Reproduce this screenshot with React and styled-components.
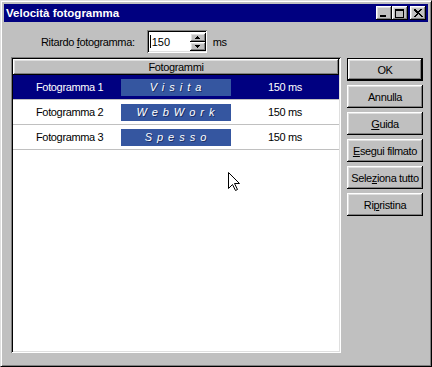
import React from "react";
import styled, { createGlobalStyle, css } from "styled-components";

const Global = createGlobalStyle`
  html, body { margin: 0; padding: 0; background: #c0c0c0; }
  body { font-family: "Liberation Sans", Arial, sans-serif; font-size: 11px; color: #000; letter-spacing: -0.35px; }
`;

const raised = css`
  background: #c0c0c0;
  box-shadow: inset -1px -1px #000, inset 1px 1px #fff, inset -2px -2px #808080, inset 2px 2px #dfdfdf;
`;

const sunken = css`
  box-shadow: inset 1px 1px #808080, inset -1px -1px #fff, inset 2px 2px #000, inset -2px -2px #dfdfdf;
`;

const Window = styled.div`
  position: relative;
  width: 432px;
  height: 367px;
  box-sizing: border-box;
  background: #c0c0c0;
  border-top: 1px solid #dfdfdf;
  border-left: 1px solid #dfdfdf;
  border-right: 1px solid #000;
  border-bottom: 1px solid #000;
  box-shadow: inset 1px 1px #fff, inset -1px -1px #808080;
  padding: 3px;
  display: flex;
  flex-direction: column;
`;

const TitleBar = styled.div`
  height: 18px;
  background: #000080;
  color: #fff;
  display: flex;
  align-items: center;
  justify-content: space-between;
  padding: 0 2px 0 2px;
`;

const Title = styled.span`
  font-weight: bold;
  font-size: 11.5px;
  letter-spacing: 0px;
`;

const TitleButtons = styled.div`
  display: flex;
  align-items: center;
`;

const TitleButton = styled.div`
  ${raised};
  width: 16px;
  height: 14px;
  margin-left: ${(p) => (p.$gap ? "2px" : "0")};
  display: flex;
  align-items: center;
  justify-content: center;
`;

const Body = styled.div`
  flex: 1;
  display: flex;
  padding-left: 7px;
`;

const LeftColumn = styled.div`
  width: 330px;
  display: flex;
  flex-direction: column;
`;

const TopRow = styled.div`
  display: flex;
  align-items: center;
  margin-top: 8px;
  height: 23px;
  padding-left: 30px;
`;

const Label = styled.span`
  margin-right: 12px;
`;

const Mn = styled.span`
  text-decoration: underline;
`;

const Field = styled.div`
  ${sunken};
  background: #fff;
  width: 60px;
  height: 23px;
  box-sizing: border-box;
  padding: 2px 1px 2px 3px;
  display: flex;
  align-items: center;
`;

const FieldText = styled.div`
  flex: 1;
  display: flex;
  align-items: center;
  letter-spacing: 0;
`;

const Caret = styled.span`
  display: inline-block;
  width: 1px;
  height: 13px;
  background: #000;
  margin-right: 1px;
`;

const Spinner = styled.div`
  width: 16px;
  height: 18px;
  display: flex;
  flex-direction: column;
`;

const SpinButton = styled.div`
  ${raised};
  flex: 1;
  display: flex;
  align-items: center;
  justify-content: center;
`;

const Unit = styled.span`
  margin-left: 6px;
`;

const ListBox = styled.div`
  ${sunken};
  background: #fff;
  margin-top: 4px;
  height: 296px;
  box-sizing: border-box;
  padding: 2px;
  display: flex;
  flex-direction: column;
`;

const Header = styled.div`
  ${raised};
  height: 16px;
  flex: none;
  display: flex;
  align-items: center;
  justify-content: center;
`;

const Row = styled.div`
  height: 25px;
  flex: none;
  box-sizing: border-box;
  border-bottom: 1px solid #c0c0c0;
  display: grid;
  grid-template-columns: 108px 110px 108px;
  align-items: center;
  background: ${(p) => (p.$selected ? "#000080" : "#fff")};
  color: ${(p) => (p.$selected ? "#fff" : "#000")};
`;

const NameCell = styled.span`
  padding-left: 23px;
  font-size: 11px;
`;

const Badge = styled.div`
  height: 17px;
  background: #3556a0;
  color: #fff;
  font-style: italic;
  font-size: 11px;
  letter-spacing: 5px;
  line-height: 17px;
  text-align: center;
  padding-left: 4px;
  text-shadow: 1px 1px 0 #1d3063;
`;

const MsCell = styled.span`
  text-align: center;
`;

const RightColumn = styled.div`
  width: 76px;
  margin-left: 6px;
  padding-top: 36px;
  display: flex;
  flex-direction: column;
  gap: 4px;
`;

const Button = styled.div`
  ${raised};
  height: 23px;
  box-sizing: border-box;
  display: flex;
  align-items: center;
  justify-content: center;
  white-space: nowrap;
  ${(p) =>
    p.$default &&
    css`
      border: 1px solid #000;
    `}
`;

const Pointer = styled.svg`
  position: absolute;
  left: 227px;
  top: 171px;
`;

const rows = [
  { name: "Fotogramma 1", badge: "Visita", ms: "150 ms", selected: true },
  { name: "Fotogramma 2", badge: "WebWork", ms: "150 ms" },
  { name: "Fotogramma 3", badge: "Spesso", ms: "150 ms" },
];

export default function App() {
  return (
    <>
      <Global />
      <Window>
        <TitleBar>
          <Title>Velocità fotogramma</Title>
          <TitleButtons>
            <TitleButton>
              <svg width="10" height="9" viewBox="0 0 10 9">
                <rect x="1" y="6" width="6" height="2" fill="#000" />
              </svg>
            </TitleButton>
            <TitleButton>
              <svg width="10" height="9" viewBox="0 0 10 9">
                <rect x="0.5" y="0.5" width="8" height="8" fill="none" stroke="#000" />
                <rect x="0" y="0" width="9" height="2" fill="#000" />
              </svg>
            </TitleButton>
            <TitleButton $gap>
              <svg width="10" height="9" viewBox="0 0 10 9">
                <path d="M1 0h2v1h1v1h2v-1h1v-1h2v1h-1v1h-1v1h-1v1h1v1h1v1h1v1h1v1h-2v-1h-1v-1h-1v-1h-1v1h-1v1h-1v1h-2v-1h1v-1h1v-1h1v-1h-1v-1h-1v-1h-1z" fill="#000" />
              </svg>
            </TitleButton>
          </TitleButtons>
        </TitleBar>
        <Body>
          <LeftColumn>
            <TopRow>
              <Label>
                Ritardo <Mn>f</Mn>otogramma:
              </Label>
              <Field>
                <FieldText>
                  <Caret />
                  150
                </FieldText>
                <Spinner>
                  <SpinButton>
                    <svg width="5" height="3" viewBox="0 0 5 3">
                      <path d="M2 0h1v1h1v1h1v1h-5v-1h1v-1h1z" fill="#000" />
                    </svg>
                  </SpinButton>
                  <SpinButton>
                    <svg width="5" height="3" viewBox="0 0 5 3">
                      <path d="M0 0h5v1h-1v1h-1v1h-1v-1h-1v-1h-1z" fill="#000" />
                    </svg>
                  </SpinButton>
                </Spinner>
              </Field>
              <Unit>ms</Unit>
            </TopRow>
            <ListBox>
              <Header>Fotogrammi</Header>
              {rows.map((r) => (
                <Row key={r.name} $selected={r.selected}>
                  <NameCell>{r.name}</NameCell>
                  <Badge>{r.badge}</Badge>
                  <MsCell>{r.ms}</MsCell>
                </Row>
              ))}
            </ListBox>
          </LeftColumn>
          <RightColumn>
            <Button $default>OK</Button>
            <Button>Annulla</Button>
            <Button>
              <span>
                <Mn>G</Mn>uida
              </span>
            </Button>
            <Button>
              <span>
                <Mn>E</Mn>segui filmato
              </span>
            </Button>
            <Button>
              <span>
                Sele<Mn>z</Mn>iona tutto
              </span>
            </Button>
            <Button>
              <span>
                Ri<Mn>p</Mn>ristina
              </span>
            </Button>
          </RightColumn>
        </Body>
        <Pointer width="13" height="20" viewBox="0 0 13 20">
          <path d="M0.5 0.5 L0.5 16.5 L4.5 12.5 L7.5 18.5 L9.5 17.5 L6.5 11.5 L11.5 11.5 Z" fill="#fff" stroke="#000" strokeWidth="1" />
        </Pointer>
      </Window>
    </>
  );
}
